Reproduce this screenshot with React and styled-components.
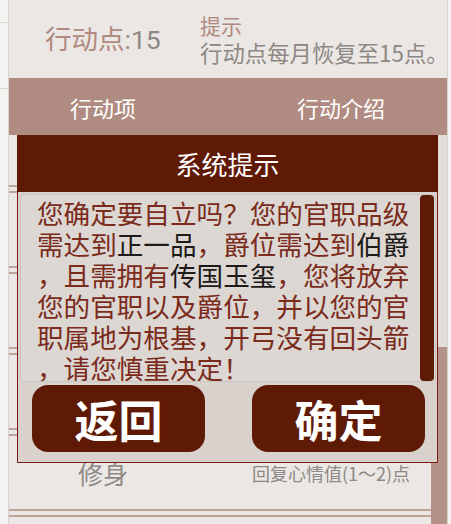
import React from "react";
import styled, { createGlobalStyle } from "styled-components";

const Global = createGlobalStyle`
  html, body { margin: 0; padding: 0; background: #f5f3f1; }
  body { font-family: "Noto Sans CJK SC", "Noto Sans", sans-serif; }
  * { box-sizing: border-box; }
`;

const Page = styled.div`
  display: flex;
  width: 451px;
  height: 524px;
  overflow: hidden;
  background: #f5f3f1;
`;

const SideStrip = styled.div`
  width: ${(p) => p.$w}px;
  flex: ${(p) => (p.$grow ? 1 : "none")};
  background-color: #f5f3f1;
  border-${(p) => p.$side}: 1px solid #d6d2ce;
  background-image: ${(p) =>
    p.$lines
      ? "linear-gradient(#dcd8d4, #dcd8d4), linear-gradient(#dcd8d4, #dcd8d4)"
      : "none"};
  background-size: 100% 1px, 100% 1px;
  background-position: 0 22px, 0 88px;
  background-repeat: no-repeat;
`;

const Panel = styled.div`
  position: relative;
  width: 438px;
  height: 524px;
  display: flex;
  flex-direction: column;
  background: #ebe7e4;
`;

const Header = styled.div`
  height: 78px;
  display: grid;
  grid-template-columns: 155px 1fr;
  align-items: center;
  padding-left: 36px;
`;

const Points = styled.div`
  font-size: 26.5px;
  line-height: 30px;
  color: #b08a80;
  white-space: nowrap;
  span { color: #8e8884; font-family: "Roboto", "Noto Sans CJK SC", sans-serif; }
`;

const Tip = styled.div`
  display: flex;
  flex-direction: column;
  white-space: nowrap;
`;

const TipTitle = styled.div`
  color: #b08a80;
  font-size: 21px;
  line-height: 27px;
`;

const TipText = styled.div`
  color: #8e8884;
  font-size: 22.4px;
  line-height: 27px;
`;

const TabBar = styled.div`
  height: 57px;
  display: grid;
  grid-template-columns: 188px 1fr;
  align-items: center;
  background: #b08b81;
  color: #ffffff;
  font-size: 22px;
`;

const TabCell = styled.div`
  text-align: center;
  padding-left: ${(p) => p.$pad || 0}px;
`;

const ListArea = styled.div`
  flex: 1;
  display: flex;
  min-height: 0;
`;

const List = styled.div`
  flex: 1;
  display: flex;
  flex-direction: column;
`;

const Row = styled.div`
  height: ${(p) => p.$h}px;
  flex: none;
  display: grid;
  grid-template-columns: 188px 1fr;
  align-items: center;
  color: #8e8985;
`;

const RowName = styled.div`
  text-align: center;
  font-size: 25px;
`;

const RowDesc = styled.div`
  text-align: center;
  padding-left: 34px;
  font-size: 18px;
  white-space: nowrap;
`;

const Separator = styled.div`
  flex: none;
  height: 8px;
  border-top: 2px solid #bca49b;
  border-bottom: 2px solid #bca49b;
`;

const Track = styled.div`
  width: 16px;
  display: flex;
  flex-direction: column;
  background: #e2deda;
`;

const TrackSpace = styled.div`
  height: 212px;
  flex: none;
`;

const Thumb = styled.div`
  flex: 1;
  background: #b4928a;
`;

const Dialog = styled.div`
  position: absolute;
  left: 8px;
  top: 135px;
  width: 421px;
  height: 328px;
  border: 1px solid #7c1a14;
  background: #d8d1cc;
  display: flex;
  flex-direction: column;
`;

const DialogTitle = styled.div`
  height: 57px;
  flex: none;
  background: #5f1a06;
  color: #ffffff;
  font-size: 26px;
  display: flex;
  align-items: center;
  justify-content: center;
  margin: -1px -1px 0;
`;

const DialogBody = styled.div`
  flex: 1;
  display: flex;
  flex-direction: column;
  padding: 2px 1px 0 2px;
`;

const TextBox = styled.div`
  height: 188px;
  flex: none;
  display: flex;
  background: #dcd7d3;
  border: 1px solid #cac4bf;
  border-radius: 4px;
  overflow: hidden;
`;

const TextContent = styled.div`
  flex: 1;
  padding: 2px 0 0 16px;
  font-size: 26.6px;
  line-height: 31px;
  color: #7b2b1b;
  overflow: hidden;
`;

const Line = styled.div`
  white-space: nowrap;
`;

const Mark = styled.span`
  color: #1e1a18;
`;

const ScrollBar = styled.div`
  width: 14px;
  flex: none;
  margin: 0 1px 0 0;
  background: #5f1a06;
  border-radius: 4px;
`;

const ButtonRow = styled.div`
  margin-top: 3px;
  height: 67px;
  display: flex;
  justify-content: space-between;
  padding: 0 11px 0 12px;
`;

const Button = styled.button`
  width: 173px;
  height: 67px;
  border: none;
  border-radius: 16px;
  background: #5f1a06;
  color: #ffffff;
  font-family: "Noto Sans CJK SC", sans-serif;
  font-size: 44px;
  font-weight: 700;
  letter-spacing: 0;
  padding: 0;
  display: flex;
  align-items: center;
  justify-content: center;
  cursor: pointer;
`;

export default function App() {
  return (
    <>
      <Global />
      <Page>
        <SideStrip $w={9} $side="right" $lines />
        <Panel>
          <Header>
            <Points>
              行动点<span>:15</span>
            </Points>
            <Tip>
              <TipTitle>提示</TipTitle>
              <TipText>行动点每月恢复至15点。</TipText>
            </Tip>
          </Header>
          <TabBar>
            <TabCell>行动项</TabCell>
            <TabCell $pad={38}>行动介绍</TabCell>
          </TabBar>
          <ListArea>
            <List>
              <Row $h={50} />
              <Separator />
              <Row $h={73} />
              <Separator />
              <Row $h={73} />
              <Separator />
              <Row $h={73} />
              <Separator />
              <Row $h={73}>
                <RowName>修身</RowName>
                <RowDesc>回复心情值(1～2)点</RowDesc>
              </Row>
              <Separator />
            </List>
            <Track>
              <TrackSpace />
              <Thumb />
            </Track>
          </ListArea>
          <Dialog>
            <DialogTitle>系统提示</DialogTitle>
            <DialogBody>
              <TextBox>
                <TextContent>
                  <Line>您确定要自立吗？您的官职品级</Line>
                  <Line>
                    需达到<Mark>正一品</Mark>，爵位需达到<Mark>伯爵</Mark>
                  </Line>
                  <Line>
                    ，且需拥有<Mark>传国玉玺</Mark>，您将放弃
                  </Line>
                  <Line>您的官职以及爵位，并以您的官</Line>
                  <Line>职属地为根基，开弓没有回头箭</Line>
                  <Line>，请您慎重决定！</Line>
                </TextContent>
                <ScrollBar />
              </TextBox>
              <ButtonRow>
                <Button>返回</Button>
                <Button>确定</Button>
              </ButtonRow>
            </DialogBody>
          </Dialog>
        </Panel>
        <SideStrip $grow $side="left" />
      </Page>
    </>
  );
}
